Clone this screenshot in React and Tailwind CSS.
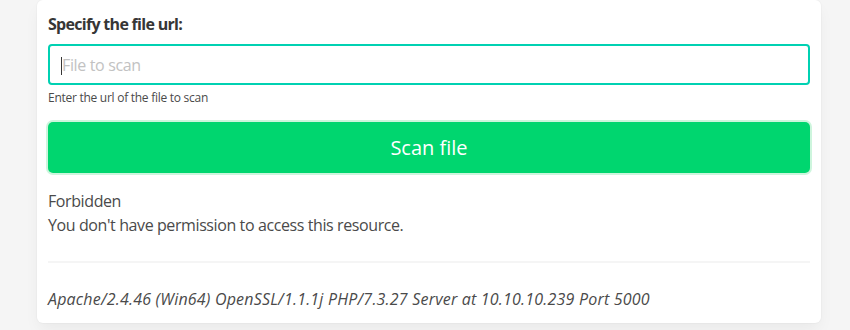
export default function App() {
  return (
    <div className="min-h-[330px] bg-[#f5f5f5] font-['Open_Sans',sans-serif] text-[#4a4a4a]">
      <div className="ml-[37px] w-[784px] rounded-b-[6px] rounded-t-[6px] bg-white px-[11px] pt-[12px] pb-[12px] shadow-[0_0.5em_1em_-0.125em_rgba(10,10,10,0.05),0_0_0_1px_rgba(10,10,10,0.02)]">
        <label className="mb-2 block text-base leading-6 font-bold tracking-[-0.7px] text-[#363636]">Specify the file url:</label>
        <div className="relative">
          <input
            type="text"
            placeholder="File to scan"
            className="block h-[41px] w-full rounded-[4px] border-2 border-[#00d1b2] bg-white px-[12px] text-base tracking-[-0.35px] text-[#363636] outline-none placeholder:text-[#c2c2c2]"
          />
          <span className="absolute top-[13px] left-[13px] h-[18px] w-px bg-[#363636]" />
        </div>
        <p className="mt-1 text-xs leading-[18px] tracking-[-0.27px] text-[#4a4a4a]">Enter the url of the file to scan</p>
        <div className="mt-[15px]">
          <button className="block h-[51px] w-full rounded-[5px] bg-[#00d66f] text-xl text-white shadow-[0_0_0_2px_#cdf5dd]">
            Scan file
          </button>
        </div>
        <div className="mt-[16px] text-base leading-6 tracking-[-0.4px]">
          <p>Forbidden</p>
          <p>You don't have permission to access this resource.</p>
        </div>
        <hr className="mt-[24px] mb-[24px] h-[2px] border-0 bg-[#f5f5f5]" />
        <address className="text-base leading-6 tracking-[0.2px] italic">Apache/2.4.46 (Win64) OpenSSL/1.1.1j PHP/7.3.27 Server at 10.10.10.239 Port 5000</address>
      </div>
    </div>
  );
}
